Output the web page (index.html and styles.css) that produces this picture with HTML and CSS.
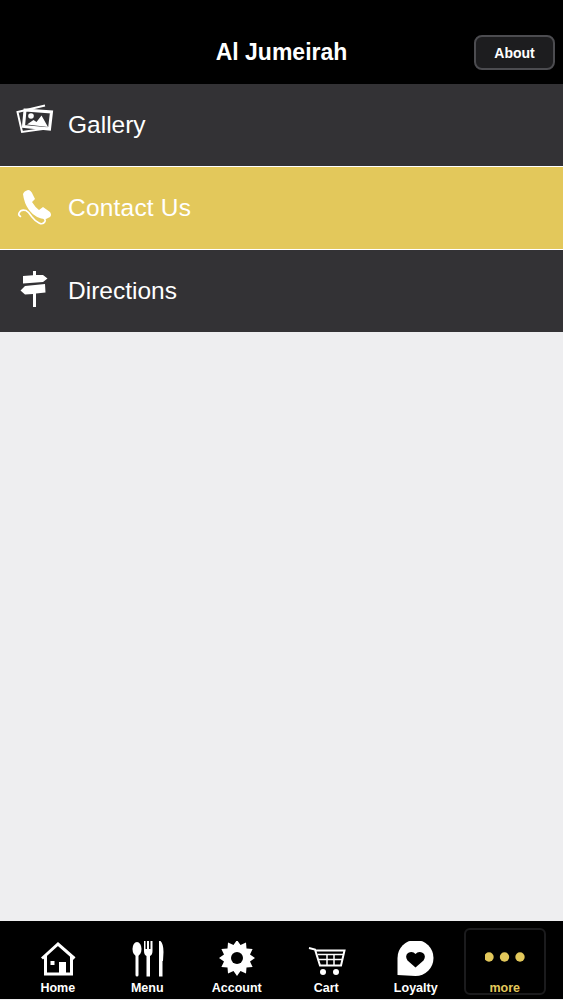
FILE: index.html
```html
<!DOCTYPE html>
<html lang="en">
<head>
    <meta charset="UTF-8">
    <meta name="viewport" content="width=device-width, initial-scale=1.0">
    <title>Al Jumeirah</title>
    <link rel="stylesheet" href="styles.css">
</head>
<body>
    <div class="app">
        <header class="top-bar">
            <h1 class="title">Al Jumeirah</h1>
            <button class="about-btn">About</button>
        </header>

        <main class="list">
            <div class="row">
                <svg class="row-icon" viewBox="13 100 44 44">
                    <path class="line" d="M45 105.5 L17.5 112 L22 132 L50 128"/>
                    <path class="line fat" d="M25 110 L51.5 112 L49.5 129 L23.5 126.5 Z" />
                    <circle class="fill" cx="31" cy="116" r="2.8"/>
                    <path class="fill" d="M27 124.5 L33.5 120 L36.5 122 L41.5 115.5 L48 127 Z"/>
                </svg>
                <span class="row-label">Gallery</span>
            </div>
            <div class="row active">
                <svg class="row-icon" viewBox="13 178 44 44">
                    <path class="fill" d="M23 189 Q24 186 28 185 Q31 185 33 190 L35 194 L32 197 Q35 202 39 205 L43 202 L50 207 Q52 210 50 212 L46 214 Q36 214 29 205 Q24 198 23 189 Z"/>
                    <path class="cord" d="M42 212 Q46 214 45 216.500 Q43 220 39 218 Q35 216 32 212 Q29 207 26 205.500 Q21 204 19 208 Q18 210 20.500 211.500"/>
                </svg>
                <span class="row-label">Contact Us</span>
            </div>
            <div class="row">
                <svg class="row-icon" viewBox="13 261 44 44">
                    <path class="fill" d="M33 266 H36 V270 H43 L47.500 273.500 L43 277 L23 278.500 V271 L33 270.300 Z"/>
                    <path class="fill" d="M25 281 L45 279 L45.500 287.500 L36 288.500 V302 H33 V289 L25 289.500 L20.500 285.500 Z"/>
                </svg>
                <span class="row-label">Directions</span>
            </div>
        </main>

        <nav class="tab-bar">
            <div class="tab">
                <svg class="tab-icon" viewBox="38 941 40 36">
                    <path class="line fat" d="M42 958.500 L58 944 L74.500 958.500"/>
                    <path class="line fat" d="M45.500 955 V974 H71.500 V955"/>
                    <rect class="fill" x="59" y="962" width="7" height="13"/>
                    <rect class="fill" x="50.500" y="961" width="4" height="4"/>
                </svg>
                <span>Home</span>
            </div>
            <div class="tab">
                <svg class="tab-icon" viewBox="127 941 40 36">
                    <ellipse class="fill" cx="137" cy="949" rx="4.500" ry="7"/>
                    <rect class="fill" x="135.500" y="952" width="3" height="24.500" rx="1.500"/>
                    <path class="fill" d="M144 941 H145.500 V949 H147 V941 H149 V949 H150.500 V941 H152.500 V951 Q152.500 955 150 956 V976.500 H146.500 V956 Q144 955 144 951 Z"/>
                    <path class="fill" d="M159 941 H160.500 Q163.500 944 163.500 952 L163 961 H162.500 V976.500 H159 Z"/>
                </svg>
                <span>Menu</span>
            </div>
            <div class="tab">
                <svg class="tab-icon" viewBox="-20 -17 40 36">
                    <polygon class="fill" points="18,0 13,3.500 15.600,9 9.500,9.500 9,15.600 3.500,13 0,18 -3.500,13 -9,15.600 -9.500,9.500 -15.600,9 -13,3.500 -18,0 -13,-3.500 -15.600,-9 -9.500,-9.500 -9,-15.600 -3.500,-13 0,-18 3.500,-13 9,-15.600 9.500,-9.500 15.600,-9 13,-3.500"/>
                    <circle class="hole" cx="0" cy="0" r="6"/>
                </svg>
                <span>Account</span>
            </div>
            <div class="tab">
                <svg class="tab-icon" viewBox="306 941 40 36">
                    <path class="line mid" d="M309 948 L315 949.500 L320 965.500 H341 L344.500 950.500 H315.500"/>
                    <path class="line thin" d="M317.500 954.500 H343 M319 959.500 H342 M327 954 V965 M334 954 V965"/>
                    <circle class="fill" cx="323" cy="972" r="3"/>
                    <circle class="fill" cx="336" cy="972" r="3"/>
                </svg>
                <span>Cart</span>
            </div>
            <div class="tab">
                <svg class="tab-icon" viewBox="396 941 40 36">
                    <path class="fill" d="M397.500 975 V958 A18 18 0 1 1 415.500 976 Z"/>
                    <path class="hole" d="M415.500 967.500 L407.500 960.500 Q404.500 956 408 953 Q412.500 950.500 415.500 954 Q418.500 950.500 423 953 Q426.500 956 423.500 960.500 Z"/>
                </svg>
                <span>Loyalty</span>
            </div>
            <div class="tab more">
                <svg class="tab-icon" viewBox="485 941 40 36">
                    <circle class="dot" cx="489" cy="957" r="4.700"/>
                    <circle class="dot" cx="504.500" cy="957" r="4.700"/>
                    <circle class="dot" cx="520" cy="957" r="4.700"/>
                </svg>
                <span class="more-label">more</span>
            </div>
        </nav>
    </div>
</body>
</html>
```

FILE: styles.css
```css
* {
    margin: 0;
    padding: 0;
    box-sizing: border-box;
}

body {
    background: #eeeef0;
    font-family: "Liberation Sans", Arial, sans-serif;
    overflow: hidden;
}

.app {
    height: 1000px;
    display: flex;
    flex-direction: column;
}

.top-bar {
    height: 84px;
    padding: 20px 8px 0;
    background: #000;
    display: grid;
    grid-template-columns: 1fr auto 1fr;
    align-items: center;
}

.title {
    grid-column: 2;
    font-size: 23px;
    font-weight: bold;
    color: #fff;
}

.about-btn {
    justify-self: end;
    width: 81px;
    height: 35px;
    margin-top: 1px;
    background: #1d1d1f;
    border: 2px solid #4c4c50;
    border-radius: 8px;
    color: #fff;
    font-family: inherit;
    font-size: 14px;
    font-weight: bold;
}

.list {
    flex: 1;
}

.row {
    height: 83px;
    padding-left: 13px;
    background: #333235;
    border-bottom: 1px solid #fff;
    display: flex;
    align-items: center;
    color: #fff;
}

.row:last-child {
    height: 82px;
    border-bottom: none;
}

.row.active {
    background: #e3c85b;
}

.row-icon {
    width: 44px;
    height: 44px;
    margin-right: 11px;
    align-self: flex-start;
    margin-top: 16px;
}

.row-label {
    font-size: 24.5px;
}

.row.active .row-label {
    letter-spacing: 0.2px;
}

.line {
    fill: none;
    stroke: #fff;
    stroke-width: 2;
}

.line.fat {
    stroke-width: 3;
}

.line.mid {
    stroke-width: 2;
}

.line.thin {
    stroke-width: 1.5;
}

.fill {
    fill: #fff;
}

.hole {
    fill: #000;
}

.dot {
    fill: #e3c85b;
}

.cord {
    fill: none;
    stroke: #fff;
    stroke-width: 1.6;
    stroke-linecap: round;
}

.tab-bar {
    height: 78px;
    margin-bottom: 1px;
    padding: 7px 13px 0;
    background: #000;
    display: grid;
    grid-template-columns: repeat(6, 1fr);
}

.tab {
    padding-top: 13px;
    display: flex;
    flex-direction: column;
    align-items: center;
    color: #fff;
    font-size: 12.5px;
    font-weight: bold;
    position: relative;
}

.tab-icon {
    width: 40px;
    height: 36px;
    margin-bottom: 4px;
}

.tab.more {
    color: #e3c85b;
}

.more-label {
    margin-right: 1px;
}

.tab.more::before {
    content: "";
    position: absolute;
    top: 0;
    bottom: 4px;
    left: 3.5px;
    right: 4px;
    border: 2px solid #1b1b1d;
    border-radius: 6px;
}
```
